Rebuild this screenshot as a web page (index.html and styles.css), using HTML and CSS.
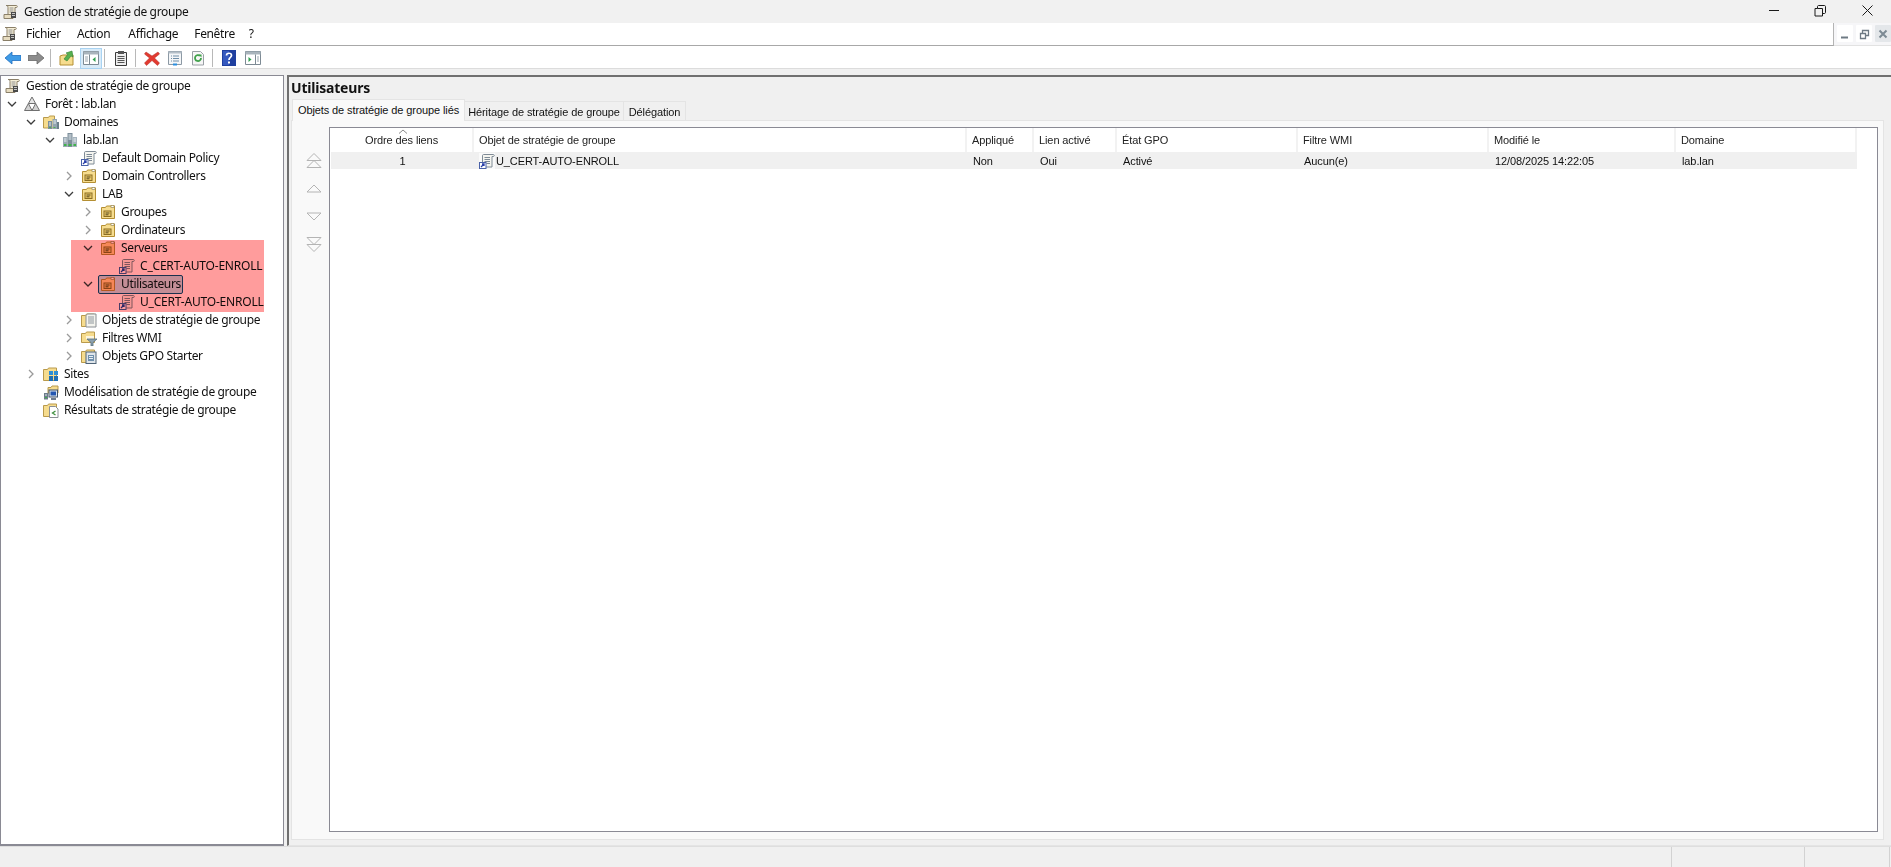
FILE: index.html
```html
<!DOCTYPE html>
<html lang="fr">
<head>
<meta charset="utf-8">
<title>Gestion de stratégie de groupe</title>
<link rel="stylesheet" href="styles.css">
</head>
<body>
<svg class="defs" width="0" height="0" aria-hidden="true">
  <defs>
    <symbol id="i-scroll" viewBox="0 0 16 16">
      <path d="M3 1.500h10.500c1 0 1 2 0 2H12v7H5V3.500C5 2 4 1.500 3 1.500z" fill="#f6efd8" stroke="#8a7f68"/>
      <path d="M6.500 4h4M6.500 6h4M6.500 8h4" stroke="#8f8f8f"/>
      <path d="M1 10.500h9v4H1z" fill="#e7dcc0" stroke="#8a7f68"/>
      <rect x="8" y="8" width="5" height="6" fill="#4a4a4a"/>
      <path d="M9 9h3v1H9zM9 11h3v1H9z" fill="#c7c7c7"/>
    </symbol>
    <symbol id="i-forest" viewBox="0 0 16 16">
      <path d="M8 1l3.600 6.500H4.400z" fill="#e6e6e6" stroke="#707070"/>
      <path d="M4.400 7.500L8 14.500H.5z" fill="#d2d2d2" stroke="#707070"/>
      <path d="M11.600 7.500l3.900 7H8z" fill="#d2d2d2" stroke="#707070"/>
    </symbol>
    <symbol id="i-domains" viewBox="0 0 16 16">
      <path d="M.5 3.500h5l1-1.500h5v12h-11z" fill="#f6dc8e" stroke="#b99a4c"/>
      <rect x="5" y="7" width="4" height="8" fill="#7c8f9c"/>
      <rect x="9.500" y="5" width="4.500" height="10" fill="#93a5b1"/>
      <rect x="14" y="8" width="2" height="7" fill="#6d808c"/>
      <path d="M6 9h2M6 11h2M10.500 7h2.500M10.500 9h2.500" stroke="#e8eef2"/>
      <path d="M6 13.500h2M10.500 13.500h2" stroke="#4fb04f"/>
    </symbol>
    <symbol id="i-domain" viewBox="0 0 16 16">
      <rect x="1" y="5" width="4.500" height="10" fill="#9aa9b4"/>
      <rect x="5.500" y="1" width="5" height="14" fill="#7d8e9a"/>
      <rect x="10.500" y="5" width="4.500" height="10" fill="#a6b4be"/>
      <path d="M2 7h2.500M2 9h2.500M6.500 3h3M6.500 5h3M6.500 7h3M11.500 7h2.500M11.500 9h2.500" stroke="#e8eef2"/>
      <path d="M2 13h2.500M6.500 13h3M11.500 13h2.500" stroke="#3fb24a" stroke-width="2"/>
    </symbol>
    <symbol id="i-gpo" viewBox="0 0 16 16">
      <path d="M4.500 1.500h10c1 0 1 2 0 2H13v10.500H3.500V3c0-1 .2-1.500 1-1.500z" fill="#f5f5f0" stroke="#7f8b96"/>
      <path d="M5.500 4.500h5.500M5.500 6.500h5.500M5.500 8.500h5.500M7.500 10.500h3.500" stroke="#7d8a96"/>
      <rect x="0.500" y="9.500" width="6.500" height="6" fill="#fff" stroke="#4a62a8"/>
      <path d="M2 14l3-3M3 11h2v2" stroke="#2a3fa8" fill="none" stroke-width="1.300"/>
    </symbol>
    <symbol id="i-ou" viewBox="0 0 16 16">
      <path d="M1.500 3.500h4l1-1.500h8v12.500h-13z" fill="#f6dc8e" stroke="#b48f33"/>
      <rect x="11" y="1.500" width="3" height="2" fill="#fff" stroke="#9c8a55" stroke-width=".7"/>
      <rect x="4" y="7" width="7" height="5.500" fill="#e9c768" stroke="#8a6d22"/>
      <path d="M5.500 9h4M5.500 10.800h3" stroke="#56481f"/>
    </symbol>
    <symbol id="i-gpofolder" viewBox="0 0 16 16">
      <path d="M.5 3.500h4l1-1.500h8v12.500H.5z" fill="#f6dc8e" stroke="#b99a4c"/>
      <path d="M7 2h8v13H5V4c0-1 1-2 2-2z" fill="#f4f4ee" stroke="#8a8f94"/>
      <path d="M7 5h6M7 7h6M7 9h6M7 11h6" stroke="#8f979e"/>
    </symbol>
    <symbol id="i-wmi" viewBox="0 0 16 16">
      <path d="M.5 3.500h4l1-1.500h8v10.500h-13z" fill="#f6dc8e" stroke="#b99a4c"/>
      <path d="M5 6h8v3h-8z" fill="#fff" opacity=".7"/>
      <path d="M6 9h10l-4 3.500V16h-2v-3.500z" fill="#8ca1b0" stroke="#57707f" stroke-width=".8"/>
    </symbol>
    <symbol id="i-starter" viewBox="0 0 16 16">
      <path d="M.5 3.500h4l1-1.500h8v12.500H.5z" fill="#f6dc8e" stroke="#b99a4c"/>
      <rect x="5" y="4" width="10" height="11.500" fill="#dfe5ea" stroke="#4f6478"/>
      <rect x="7" y="7" width="6" height="6" fill="#6f90ad"/>
      <path d="M8 8.500h4M8 10.500h4" stroke="#e9f0f5"/>
    </symbol>
    <symbol id="i-sites" viewBox="0 0 16 16">
      <path d="M.5 3.500h4l1-1.500h8v12.500H.5z" fill="#f6dc8e" stroke="#b99a4c"/>
      <rect x="6" y="5" width="4" height="4" fill="#2d8fd6"/>
      <rect x="11" y="5" width="4" height="4" fill="#2d8fd6"/>
      <rect x="6" y="10" width="4" height="5" fill="#1e6fb5"/>
      <rect x="11" y="10" width="4" height="5" fill="#1e6fb5"/>
    </symbol>
    <symbol id="i-model" viewBox="0 0 16 16">
      <path d="M5 3.500h3l1-1.500h6v7H5z" fill="#f6dc8e" stroke="#b99a4c"/>
      <rect x="1" y="9" width="4" height="6.500" fill="#6c7c8a"/>
      <rect x="6" y="6" width="8.500" height="7" fill="#dce6ee" stroke="#3f5068"/>
      <rect x="7.500" y="7.500" width="5.500" height="4" fill="#2457b0"/>
      <path d="M8 15h5" stroke="#3f5068" stroke-width="1.500"/>
      <path d="M2 11h2" stroke="#dfe7ec"/>
      <path d="M2 13.500h2" stroke="#3fb24a"/>
    </symbol>
    <symbol id="i-results" viewBox="0 0 16 16">
      <path d="M.5 3.500h4l1-1.500h8v12.500H.5z" fill="#f6dc8e" stroke="#b99a4c"/>
      <path d="M6.500 4.500h6l2.500 2.500v8.500H6.500z" fill="#fff" stroke="#8a8f94"/>
      <path d="M12.500 9l-3 2 3 2" fill="none" stroke="#3f8f3f" stroke-width="1.300"/>
    </symbol>
    <symbol id="i-down" viewBox="0 0 10 10"><path d="M1 3l4 4 4-4" fill="none" stroke="#3c3c3c" stroke-width="1.300"/></symbol>
    <symbol id="i-right" viewBox="0 0 10 10"><path d="M3 1l4 4-4 4" fill="none" stroke="#9a9a9a" stroke-width="1.300"/></symbol>
  </defs>
</svg>

<header class="titlebar">
  <div class="title-left">
    <svg class="ico16"><use href="#i-scroll"/></svg>
    <span class="title-text">Gestion de stratégie de groupe</span>
  </div>
  <div class="winctl">
    <svg class="winbtn" viewBox="0 0 46 23"><path d="M16 10.500h10" stroke="#1a1a1a"/></svg>
    <svg class="winbtn" viewBox="0 0 46 23"><path d="M18.500 8.500h-2.500v7.500h7.500v-7.500h-5zM18.500 8.500V6.500c0-.5.500-1 1-1h6c.5 0 1 .5 1 1v6c0 .5-.5 1-1 1h-2" fill="none" stroke="#1a1a1a"/></svg>
    <svg class="winbtn" viewBox="0 0 46 23"><path d="M17.500 5.500l10 10M27.500 5.500l-10 10" stroke="#1a1a1a"/></svg>
  </div>
</header>

<nav class="menubar">
  <div class="menu-main">
    <svg class="ico16 menu-ico"><use href="#i-scroll"/></svg>
    <span class="menu-item m-1">Fichier</span>
    <span class="menu-item m-2">Action</span>
    <span class="menu-item m-3">Affichage</span>
    <span class="menu-item m-4">Fenêtre</span>
    <span class="menu-item">?</span>
  </div>
  <div class="mdi">
    <span class="mdi-btn"><svg width="16" height="16" viewBox="0 0 16 16"><path d="M4 11.500h7" stroke="#6e7a84" stroke-width="2"/></svg></span>
    <span class="mdi-btn"><svg width="16" height="16" viewBox="0 0 16 16"><path d="M4.500 7.500h5v5h-5zM6.500 7V4.500h6v5H10" fill="none" stroke="#6e7a84" stroke-width="1.300"/></svg></span>
    <span class="mdi-btn mdi-close"><svg width="16" height="16" viewBox="0 0 16 16"><path d="M4.500 4.500l7 7M11.500 4.500l-7 7" stroke="#7d8a94" stroke-width="2"/></svg></span>
  </div>
</nav>

<div class="toolbar">
  <button class="tool"><svg width="16" height="16" viewBox="0 0 16 16"><path d="M0 8l7-6v3.500h9v5H7V14z" fill="#3f9be6" stroke="#1f6fc0" stroke-width=".8"/></svg></button>
  <button class="tool"><svg width="16" height="16" viewBox="0 0 16 16"><path d="M16 8L9 2v3.500H0v5h9V14z" fill="#8c8c8c" stroke="#6a6a6a" stroke-width=".8"/></svg></button>
  <i class="tsep"></i>
  <button class="tool"><svg width="16" height="16" viewBox="0 0 16 16"><path d="M1 6l3-1h10v10H1z" fill="#f6dc8e" stroke="#b48f33"/><path d="M5 9l4-5-2-1 6-2 1 6-2-1-4 5z" fill="#57b04f" stroke="#2f7f2f" stroke-width=".6"/></svg></button>
  <button class="tool tool-on"><svg width="16" height="14" viewBox="0 0 16 14"><path d="M.5.500h15v13H.5z" fill="#fff" stroke="#7d8a94"/><path d="M.5.500h15v3H.5z" fill="#a9b4bc"/><path d="M6.500 3.500v10" stroke="#7d8a94"/><path d="M12.500 6v5l-3-2.500z" fill="#2fa04f"/><path d="M2 6h3M2 8h3M2 10h3" stroke="#9aa6ae"/></svg></button>
  <i class="tsep"></i>
  <button class="tool"><svg width="16" height="16" viewBox="0 0 16 16"><path d="M2.500 2.500h11v13h-11z" fill="#eeeeee" stroke="#3a3a3a"/><rect x="5" y="1" width="6" height="3" fill="#555"/><path d="M4.500 6.500h7M4.500 8.500h7M4.500 10.500h7M4.500 12.500h7" stroke="#555"/></svg></button>
  <i class="tsep"></i>
  <button class="tool"><svg width="16" height="16" viewBox="0 0 16 16"><path d="M2 2l6 4 6-4 1.500 2-5 4 5 5-2 2.500-5.500-5-5.500 5-2-2.500 5-5-5-4z" fill="#e23a30" stroke="#b02a22" stroke-width=".5"/></svg></button>
  <button class="tool"><svg width="16" height="16" viewBox="0 0 16 16"><path d="M1.500 1.500h13v13h-13z" fill="#f4f6f8" stroke="#8c99a4"/><path d="M1.500 1.500h13v2h-13z" fill="#b4bfc8"/><path d="M4 6h1M6 6h6M4 8.500h1M6 8.500h6M4 11h1M6 11h6" stroke="#6f8ea8"/><path d="M6 14.500h4" stroke="#2a8fe0" stroke-width="2"/></svg></button>
  <button class="tool"><svg width="16" height="16" viewBox="0 0 16 16"><path d="M2.500 1.500h8l3 3v10.500h-11z" fill="#f6f6f6" stroke="#9aa0a6"/><path d="M11 8a3 3 0 1 1-1-2.200" fill="none" stroke="#3fa14a" stroke-width="1.800"/><path d="M8.500 4.500h3v3z" fill="#3fa14a"/></svg></button>
  <i class="tsep"></i>
  <button class="tool t-help"><svg width="14" height="16" viewBox="0 0 14 16"><rect width="14" height="16" fill="#1f3f9f"/><rect x="1" y="1" width="6" height="14" fill="#3559bf"/><path d="M4.500 5.500c0-3 5-3 5 0 0 2-2.500 2-2.500 4.500" fill="none" stroke="#fff" stroke-width="1.700"/><rect x="6" y="11.500" width="2" height="2" fill="#fff"/></svg></button>
  <button class="tool"><svg width="16" height="14" viewBox="0 0 16 14"><path d="M.5.500h15v13H.5z" fill="#fff" stroke="#7d8a94"/><path d="M.5.500h15v3H.5z" fill="#a9b4bc"/><path d="M10.500 3.500v10" stroke="#7d8a94"/><path d="M3.500 6v5l3-2.500z" fill="#2fa04f"/><path d="M12 6h2M12 8h2M12 10h2" stroke="#9aa6ae"/></svg></button>
</div>

<main class="workspace">
  <section class="tree">
    <div class="row"><svg class="ico"><use href="#i-scroll"/></svg><span>Gestion de stratégie de groupe</span></div>
    <div class="row d1"><svg class="chev"><use href="#i-down"/></svg><svg class="ico"><use href="#i-forest"/></svg><span>Forêt : lab.lan</span></div>
    <div class="row d2"><svg class="chev"><use href="#i-down"/></svg><svg class="ico"><use href="#i-domains"/></svg><span>Domaines</span></div>
    <div class="row d3"><svg class="chev"><use href="#i-down"/></svg><svg class="ico"><use href="#i-domain"/></svg><span>lab.lan</span></div>
    <div class="row d4"><i class="chev"></i><svg class="ico"><use href="#i-gpo"/></svg><span>Default Domain Policy</span></div>
    <div class="row d4"><svg class="chev"><use href="#i-right"/></svg><svg class="ico"><use href="#i-ou"/></svg><span>Domain Controllers</span></div>
    <div class="row d4"><svg class="chev"><use href="#i-down"/></svg><svg class="ico"><use href="#i-ou"/></svg><span>LAB</span></div>
    <div class="row d5"><svg class="chev"><use href="#i-right"/></svg><svg class="ico"><use href="#i-ou"/></svg><span>Groupes</span></div>
    <div class="row d5"><svg class="chev"><use href="#i-right"/></svg><svg class="ico"><use href="#i-ou"/></svg><span>Ordinateurs</span></div>
    <div class="row d5"><svg class="chev"><use href="#i-down"/></svg><svg class="ico"><use href="#i-ou"/></svg><span>Serveurs</span></div>
    <div class="row d6"><i class="chev"></i><svg class="ico"><use href="#i-gpo"/></svg><span class="caps">C_CERT-AUTO-ENROLL</span></div>
    <div class="row d5"><svg class="chev"><use href="#i-down"/></svg><div class="selected"><svg class="ico"><use href="#i-ou"/></svg><span>Utilisateurs</span></div></div>
    <div class="row d6"><i class="chev"></i><svg class="ico"><use href="#i-gpo"/></svg><span class="caps">U_CERT-AUTO-ENROLL</span></div>
    <div class="row d4"><svg class="chev"><use href="#i-right"/></svg><svg class="ico"><use href="#i-gpofolder"/></svg><span>Objets de stratégie de groupe</span></div>
    <div class="row d4"><svg class="chev"><use href="#i-right"/></svg><svg class="ico"><use href="#i-wmi"/></svg><span>Filtres WMI</span></div>
    <div class="row d4"><svg class="chev"><use href="#i-right"/></svg><svg class="ico"><use href="#i-starter"/></svg><span>Objets GPO Starter</span></div>
    <div class="row d2"><svg class="chev"><use href="#i-right"/></svg><svg class="ico"><use href="#i-sites"/></svg><span>Sites</span></div>
    <div class="row d2"><i class="chev"></i><svg class="ico"><use href="#i-model"/></svg><span>Modélisation de stratégie de groupe</span></div>
    <div class="row d2"><i class="chev"></i><svg class="ico"><use href="#i-results"/></svg><span>Résultats de stratégie de groupe</span></div>
    <div class="redact"></div>
  </section>

  <section class="detail">
    <h1 class="detail-title">Utilisateurs</h1>
    <div class="tabs">
      <span class="tab tab-on">Objets de stratégie de groupe liés</span>
      <span class="tab t-2">Héritage de stratégie de groupe</span>
      <span class="tab t-3">Délégation</span>
    </div>
    <div class="panel">
      <div class="moves">
        <svg width="18" height="16" viewBox="0 0 18 16"><path d="M9 0.500l7 7H2zM9 7.500l7 7H2z" fill="#fafafa" stroke="#b4b4b4"/></svg>
        <svg width="18" height="14" viewBox="0 0 18 14"><path d="M9 3l7 7H2z" fill="#fafafa" stroke="#b4b4b4"/></svg>
        <svg width="18" height="14" viewBox="0 0 18 14"><path d="M9 11l7-7H2z" fill="#fafafa" stroke="#b4b4b4"/></svg>
        <svg width="18" height="16" viewBox="0 0 18 16"><path d="M9 8.500l7-7H2zM9 15.500l7-7H2z" fill="#fafafa" stroke="#b4b4b4"/></svg>
      </div>
      <div class="list">
        <div class="grid head">
          <div class="cell center">Ordre des liens<svg class="sort" width="10" height="5" viewBox="0 0 10 5"><path d="M1 4.500l4-3.500 4 3.500" fill="none" stroke="#8a8a8a"/></svg></div>
          <div class="cell">Objet de stratégie de groupe</div>
          <div class="cell">Appliqué</div>
          <div class="cell">Lien activé</div>
          <div class="cell">État GPO</div>
          <div class="cell">Filtre WMI</div>
          <div class="cell">Modifié le</div>
          <div class="cell">Domaine</div>
        </div>
        <div class="grid data">
          <div class="cell center">1</div>
          <div class="cell gpo-cell"><svg class="ico row-ico"><use href="#i-gpo"/></svg><span>U_CERT-AUTO-ENROLL</span></div>
          <div class="cell">Non</div>
          <div class="cell">Oui</div>
          <div class="cell">Activé</div>
          <div class="cell">Aucun(e)</div>
          <div class="cell">12/08/2025 14:22:05</div>
          <div class="cell">lab.lan</div>
        </div>
      </div>
    </div>
  </section>
</main>

<footer class="statusbar">
  <span class="st st-a"></span>
  <span class="st st-b"></span>
  <span class="st st-c"></span>
</footer>
</body>
</html>
```

FILE: styles.css
```css
* { box-sizing: border-box; }
html, body { height: 100%; }
body {
  margin: 0;
  height: 100vh;
  overflow: hidden;
  display: flex;
  flex-direction: column;
  background: #f0f0f0;
  color: #111;
  font: 12px/16px "Noto Sans", "Open Sans", sans-serif;
  letter-spacing: -0.35px;
}
.defs { position: absolute; }
.ico16, .ico { width: 16px; height: 16px; flex: none; display: block; }

.titlebar { height: 23px; display: flex; justify-content: space-between; align-items: center; background: #f1f1f1; flex: none; }
.title-left { display: flex; align-items: center; padding-left: 3px; gap: 5px; }
.winctl { display: flex; align-items: center; height: 23px; }
.winbtn { width: 46px; height: 23px; display: block; }

.menubar { height: 23px; flex: none; display: flex; background: #fff; }
.menu-main { flex: 1; display: flex; align-items: center; padding-left: 2px; border-bottom: 1px solid #a8a8a8; border-right: 1px solid #b4b4b4; }
.menu-ico { margin-right: 8px; }
.menu-item.m-1 { margin-right: 16px; }
.menu-item.m-2 { margin-right: 18px; }
.menu-item.m-3 { margin-right: 16px; }
.menu-item.m-4 { margin-right: 14px; }
.mdi { width: 57px; display: flex; gap: 3px; padding: 2px 2px 2px 3px; background: #f6f6f8; border-bottom: 1px solid #e2e2e2; }
.mdi-btn { width: 16px; height: 17px; background: #fff; display: flex; align-items: center; justify-content: center; border-radius: 1px; }
.mdi-close { background: #e4e7ea; }

.toolbar { height: 23px; flex: none; display: flex; align-items: center; background: #fff; border-bottom: 1px solid #dcdcdc; padding: 2px 0 0 5px; }
.tool { border: 0; background: none; padding: 0; width: 16px; height: 16px; display: flex; align-items: center; justify-content: center; margin-right: 7px; }
.tool-on { width: 22px; height: 21px; margin: 0 3px 0 -2px; background: #d9ebf8; border: 1px solid #a9d3f2; }
.tsep { width: 1px; height: 18px; background: #b8b8b8; margin: 0 8px 0 -1px; flex: none; }
.t-help { margin-right: 8px; }

.workspace { flex: 1; min-height: 0; display: flex; gap: 3px; padding-top: 6px; }
.tree { position: relative; width: 284px; flex: none; background: #fff; border: 1px solid #8a8a94; border-width: 1px 1px 2px; padding-top: 1px; }
.row { height: 18px; display: flex; align-items: center; padding-left: 4px; white-space: nowrap; gap: 5px; }
.row .chev { width: 10px; height: 10px; flex: none; margin-right: 2px; display: block; }
.d1 { padding-left: 6px; }
.d2 { padding-left: 25px; }
.d3 { padding-left: 44px; }
.d4 { padding-left: 63px; }
.d5 { padding-left: 82px; }
.d6 { padding-left: 101px; }
.caps { letter-spacing: -0.2px; }
.selected { display: flex; align-items: center; gap: 5px; height: 19px; margin-left: -2px; padding: 0 1px; background: #c4e6f5; border: 1px solid #1c4f80; border-radius: 2px; }
.redact { position: absolute; left: 70px; top: 164px; width: 193px; height: 72px; background: #ff9c9c; mix-blend-mode: multiply; }

.detail { flex: 1; min-width: 0; display: flex; flex-direction: column; border-top: 2px solid #707070; border-left: 2px solid #707070; border-bottom: 1px solid #e4e4e4; padding: 0 7px 5px 2px; font-family: "Liberation Sans", Arial, sans-serif; font-size: 11px; letter-spacing: -0.1px; }
.detail-title { margin: 0; height: 22px; font-family: "Noto Sans", sans-serif; font-size: 14px; line-height: 22px; font-weight: 700; letter-spacing: -0.2px; }
.tabs { display: flex; align-items: flex-end; height: 21px; flex: none; white-space: nowrap; padding-left: 1px; }
.tab { height: 19px; padding-top: 2px; background: #f0f0f0; border: 1px solid #e4e4e4; border-bottom: 0; border-left: 0; text-align: center; }
.tab-on { height: 22px; margin-bottom: -1px; width: 173px; background: #f9f9f9; border-left: 1px solid #e4e4e4; position: relative; padding-top: 2px; }
.t-2 { width: 159px; }
.t-3 { width: 62px; }
.panel { flex: 1; min-height: 0; display: flex; background: #f9f9f9; border: 1px solid #e4e4e4; padding: 6px 5px 7px 0; }
.moves { width: 37px; flex: none; display: flex; flex-direction: column; align-items: center; padding-top: 26px; gap: 13px; padding-left: 6px; }
.list { flex: 1; min-width: 0; background: #fff; border: 1px solid #8a8a94; padding-left: 1px; }
.grid { display: grid; width: 1526px; grid-template-columns: 143px 493px 67px 83px 181px 191px 187px 181px; }
.head { height: 24px; }
.head .cell { height: 24px; border-right: 2px solid #f2f2f2; display: flex; align-items: center; padding-left: 5px; position: relative; color: #222; }
.head .center { justify-content: center; padding-left: 0; }
.sort { position: absolute; left: 67px; top: 1px; }
.data { height: 17px; background: #f0f0f0; }
.data .cell { display: flex; align-items: center; padding-left: 6px; height: 17px; }
.data .center { justify-content: center; padding-left: 0; }
.data .gpo-cell { gap: 1px; padding-left: 5px; }
.row-ico { background: #fafafa; }

.statusbar { height: 21px; flex: none; display: flex; border-top: 1px solid #dedede; }
.st { height: 100%; border-right: 1px solid #d2d2d2; }
.st-a { width: 1672px; }
.st-b { width: 133px; }
.st-c { width: 85px; }
```
